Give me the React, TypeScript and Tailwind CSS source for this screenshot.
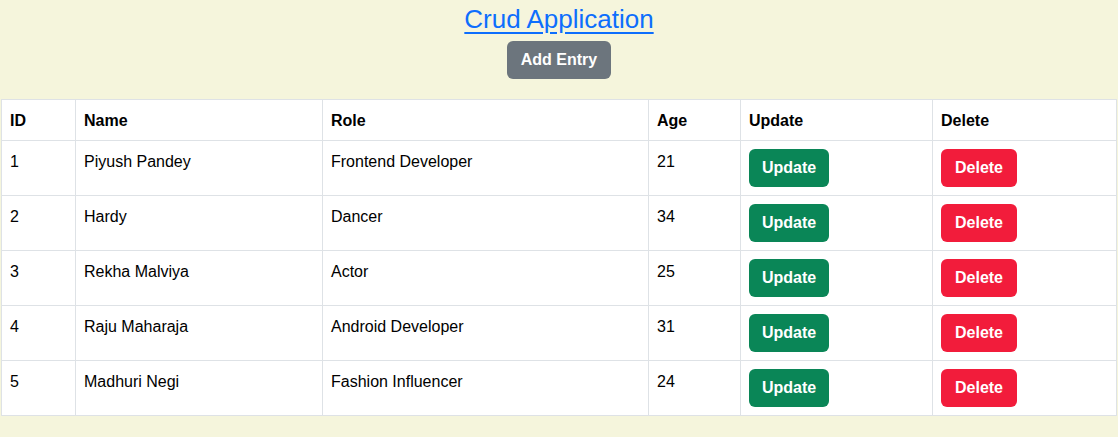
import React from "react";

const rows = [
  { id: 1, name: "Piyush Pandey", role: "Frontend Developer", age: 21 },
  { id: 2, name: "Hardy", role: "Dancer", age: 34 },
  { id: 3, name: "Rekha Malviya", role: "Actor", age: 25 },
  { id: 4, name: "Raju Maharaja", role: "Android Developer", age: 31 },
  { id: 5, name: "Madhuri Negi", role: "Fashion Influencer", age: 24 },
];

export default function App() {
  return (
    <div
      className="min-h-[437px] bg-[#f5f5dc] text-black text-[16px] leading-6"
      style={{ fontFamily: '"Comic Sans MS", "Liberation Sans", sans-serif' }}
    >
      <div className="flex flex-col items-center pt-[4px]">
        <a href="#" className="text-[26px] leading-[30px] text-[#0d6efd] underline underline-offset-[4px]">
          Crud Application
        </a>
        <button className="mt-[7px] h-[38px] w-[104px] rounded-[6px] bg-[#6c757d] text-white font-bold text-[16px]">
          Add Entry
        </button>
      </div>
      <div className="px-[1px] pt-[20px]">
        <table className="w-full table-fixed border-collapse bg-white">
          <colgroup>
            <col className="w-[74px]" />
            <col className="w-[247px]" />
            <col className="w-[326px]" />
            <col className="w-[92px]" />
            <col className="w-[192px]" />
            <col />
          </colgroup>
          <thead>
            <tr>
              {["ID", "Name", "Role", "Age", "Update", "Delete"].map((h) => (
                <th key={h} className="border border-[#dee2e6] p-[8px] pt-[9px] pb-[7px] text-left font-bold align-top">
                  {h}
                </th>
              ))}
            </tr>
          </thead>
          <tbody>
            {rows.map((r) => (
              <tr key={r.id}>
                <td className="border border-[#dee2e6] p-[8px] align-top">
                  <div className="pt-[1px]">{r.id}</div>
                </td>
                <td className="border border-[#dee2e6] p-[8px] align-top">
                  <div className="pt-[1px]">{r.name}</div>
                </td>
                <td className="border border-[#dee2e6] p-[8px] align-top">
                  <div className="pt-[1px]">{r.role}</div>
                </td>
                <td className="border border-[#dee2e6] p-[8px] align-top">
                  <div className="pt-[1px]">{r.age}</div>
                </td>
                <td className="border border-[#dee2e6] p-[8px] align-top">
                  <button className="h-[38px] w-[80px] rounded-[6px] bg-[#0a8657] text-white font-bold">
                    Update
                  </button>
                </td>
                <td className="border border-[#dee2e6] p-[8px] align-top">
                  <button className="h-[38px] w-[76px] rounded-[6px] bg-[#f21c3b] text-white font-bold">
                    Delete
                  </button>
                </td>
              </tr>
            ))}
          </tbody>
        </table>
      </div>
    </div>
  );
}
